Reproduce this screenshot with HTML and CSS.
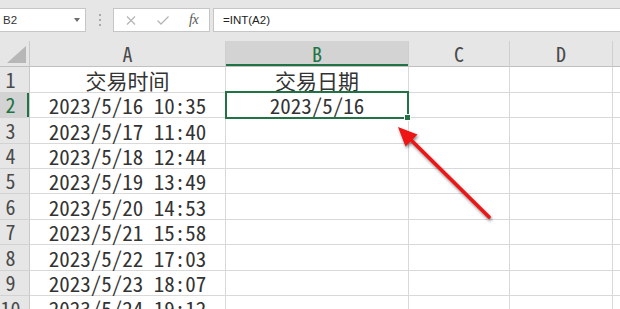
FILE: index.html
```html
<!DOCTYPE html>
<html lang="zh-CN">
<head>
<meta charset="utf-8">
<title>Excel INT</title>
<link rel="stylesheet" href="styles.css">
</head>
<body>
<div class="toolbar">
  <div class="namebox"><span class="nb-text">B2</span><span class="nb-arrow"></span></div>
  <div class="grip"><i></i><i></i><i></i></div>
  <div class="fxbox">
    <svg class="ico-x" width="10" height="9" viewBox="0 0 10 9"><path d="M1 0.5 L9 8.5 M9 0.5 L1 8.5" stroke="#b5b5b5" stroke-width="1.2" fill="none"/></svg>
    <svg class="ico-ok" width="12" height="9" viewBox="0 0 12 9"><path d="M0.5 4.5 L4 8 L11.5 0.5" stroke="#b5b5b5" stroke-width="1.3" fill="none"/></svg>
    <span class="ico-fx">fx</span>
  </div>
  <div class="formula">=INT(A2)</div>
</div>

<div class="sheet">
  <div class="corner"><svg width="19" height="17" viewBox="0 0 19 17"><polygon points="0,17 19,0 19,17" fill="#b7b7b7"/></svg></div>
  <div class="colhead">A</div>
  <div class="colhead active">B</div>
  <div class="colhead">C</div>
  <div class="colhead">D</div>
  <div class="colhead last"></div>

  <div class="rowhead">1</div>
  <div class="cell">交易时间</div>
  <div class="cell">交易日期</div>
  <div class="cell"></div><div class="cell"></div><div class="cell last"></div>

  <div class="rowhead active">2</div>
  <div class="cell">2023/5/16 10:35</div>
  <div class="cell sel">2023/5/16<span class="handle"></span></div>
  <div class="cell"></div><div class="cell"></div><div class="cell last"></div>

  <div class="rowhead">3</div>
  <div class="cell">2023/5/17 11:40</div>
  <div class="cell"></div><div class="cell"></div><div class="cell"></div><div class="cell last"></div>

  <div class="rowhead">4</div>
  <div class="cell">2023/5/18 12:44</div>
  <div class="cell"></div><div class="cell"></div><div class="cell"></div><div class="cell last"></div>

  <div class="rowhead">5</div>
  <div class="cell">2023/5/19 13:49</div>
  <div class="cell"></div><div class="cell"></div><div class="cell"></div><div class="cell last"></div>

  <div class="rowhead">6</div>
  <div class="cell">2023/5/20 14:53</div>
  <div class="cell"></div><div class="cell"></div><div class="cell"></div><div class="cell last"></div>

  <div class="rowhead">7</div>
  <div class="cell">2023/5/21 15:58</div>
  <div class="cell"></div><div class="cell"></div><div class="cell"></div><div class="cell last"></div>

  <div class="rowhead">8</div>
  <div class="cell">2023/5/22 17:03</div>
  <div class="cell"></div><div class="cell"></div><div class="cell"></div><div class="cell last"></div>

  <div class="rowhead">9</div>
  <div class="cell">2023/5/23 18:07</div>
  <div class="cell"></div><div class="cell"></div><div class="cell"></div><div class="cell last"></div>

  <div class="rowhead">10</div>
  <div class="cell top">2023/5/24 19:12</div>
  <div class="cell"></div><div class="cell"></div><div class="cell"></div><div class="cell last"></div>
</div>

<svg class="arrow" width="620" height="309" viewBox="0 0 620 309">
  <g class="arrow-g">
    <line x1="489" y1="217" x2="408" y2="137" stroke="#ee1515" stroke-width="3.6" stroke-linecap="round"/>
    <polygon points="398,127 417.5,134.5 405.5,146.5" fill="#ee1515"/>
  </g>
</svg>
</body>
</html>
```

FILE: styles.css
```css
* { box-sizing: border-box; }
html, body { margin: 0; padding: 0; }
body {
  width: 620px;
  height: 309px;
  overflow: hidden;
  background: #ffffff;
  position: relative;
  font-family: "Liberation Sans", Arial, sans-serif;
}

/* ---------- formula toolbar ---------- */
.toolbar {
  height: 41px;
  background: #e6e6e6;
  display: flex;
  align-items: flex-start;
  padding-top: 8px;
}
.namebox {
  width: 86px;
  height: 24px;
  background: #fff;
  border: 1px solid #c6c6c6;
  border-left: none;
  display: flex;
  align-items: center;
  justify-content: space-between;
  padding: 0 5px 0 3px;
  font-size: 11.5px;
  color: #333;
}
.nb-arrow {
  width: 0; height: 0;
  border-left: 3.5px solid transparent;
  border-right: 3.5px solid transparent;
  border-top: 4px solid #6d6d6d;
}
.grip {
  width: 27px;
  height: 24px;
  display: flex;
  flex-direction: column;
  align-items: center;
  justify-content: center;
  gap: 3px;
}
.grip i {
  display: block;
  width: 2px;
  height: 2px;
  background: #a9a9a9;
}
.fxbox {
  width: 97px;
  height: 24px;
  background: #fff;
  border: 1px solid #c6c6c6;
  display: flex;
  align-items: center;
  padding-left: 12px;
}
.ico-x { margin-right: 21px; }
.ico-ok { margin-right: 20px; }
.ico-fx {
  font-family: "Liberation Serif", "Times New Roman", serif;
  font-style: italic;
  font-size: 14px;
  color: #555;
  letter-spacing: -0.5px;
}
.formula {
  flex: 1;
  margin-left: 3px;
  height: 24px;
  background: #fff;
  border: 1px solid #c6c6c6;
  border-right: none;
  padding-left: 9px;
  font-size: 11.5px;
  line-height: 22px;
  color: #222;
}

/* ---------- sheet grid ---------- */
.sheet {
  display: grid;
  grid-template-columns: 30px 196px 183px 101px 103px 1fr;
  grid-template-rows: 26px 26px 25px 26px 25px 25px 26px 25px 26px 25px 26px;
  font-family: "Noto Sans Mono CJK SC", "Noto Sans CJK SC", monospace;
  font-feature-settings: "hwid" 1;
  font-weight: 300;
}
.corner {
  background: #e6e6e6;
  border-right: 1px solid #c9c9c9;
  border-bottom: 1px solid #c0c0c0;
  display: flex;
  align-items: flex-end;
  justify-content: flex-end;
  padding: 0 3px 3px 0;
}
.colhead {
  background: #e6e6e6;
  border-right: 1px solid #cfcfcf;
  border-bottom: 1px solid #c0c0c0;
  font-size: 20px;
  line-height: 25px;
  text-align: center;
  color: #4a4a4a;
}
.colhead.active {
  background: #d3d3d3;
  color: #217346;
  box-shadow: inset 0 -2px 0 #217346;
}
.rowhead {
  background: #e6e6e6;
  border-right: 1px solid #c9c9c9;
  border-bottom: 1px solid #d2d2d2;
  font-size: 20px;
  line-height: 24px;
  padding-right: 8px;
  text-align: center;
  color: #4a4a4a;
  display: flex;
  align-items: flex-end;
  justify-content: center;
}
.rowhead.active {
  background: #d3d3d3;
  color: #217346;
  box-shadow: inset -2px 0 0 #217346;
}
.cell {
  border-right: 1px solid #d9d9d9;
  border-bottom: 1px solid #d9d9d9;
  font-size: 21px;
  line-height: 24px;
  color: #333333;
  display: flex;
  align-items: flex-end;
  justify-content: center;
  white-space: nowrap;
}
.cell.top { align-items: flex-start; }
.last { border-right: none; }
.cell.sel { position: relative; }
.cell.sel::before {
  content: "";
  position: absolute;
  left: -1px; right: -1px; top: -2px; bottom: -2px;
  border: 2px solid #217346;
  pointer-events: none;
}
.handle {
  position: absolute;
  left: 178px;
  top: 21px;
  width: 7px;
  height: 7px;
  background: #217346;
  border: 1px solid #fff;
}

/* ---------- annotation arrow ---------- */
.arrow {
  position: absolute;
  left: 0;
  top: 0;
  pointer-events: none;
}
.arrow-g { filter: drop-shadow(1.5px 2px 1.5px rgba(0,0,0,0.45)); }
```
